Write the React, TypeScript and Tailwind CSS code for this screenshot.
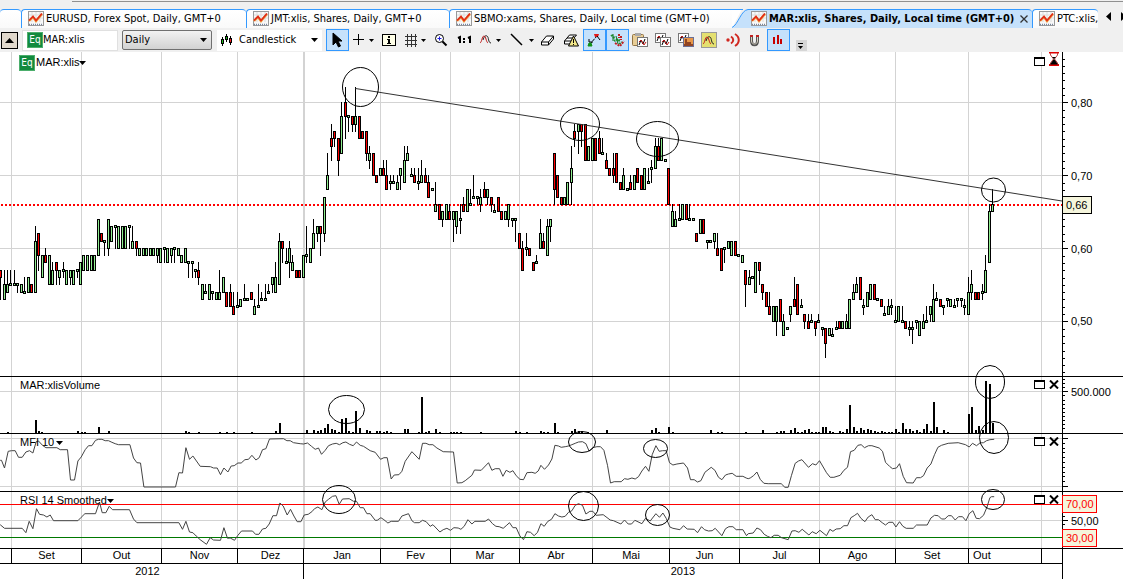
import React from 'react';

type Candle = [x: number, up: 0 | 1, top: number, bottom: number, high: number, low: number];

// x, rising flag, body top, body bottom, high, low (prices in cents)
const CANDLES: Candle[] = [
  [0,0,57,56,57,53],[4,1,55,53,57,53],[7,1,55,54,57,54],[10,1,55,55,57,55],[14,1,55,55,57,55],[17,1,55,55,55,54],
  [21,1,55,54,55,54],[24,1,54,54,56,54],[28,1,56,54,56,54],[31,0,55,54,55,54],[35,1,61,54,63,54],[38,0,62,59,62,57],
  [42,1,59,56,59,56],[45,0,59,58,60,58],[49,1,59,55,59,55],[52,1,57,55,58,55],[56,0,58,57,58,55],[59,1,57,56,57,55],
  [63,1,57,57,58,56],[66,1,57,55,57,55],[70,1,57,56,57,55],[73,1,57,55,57,55],[77,1,57,57,57,56],[80,1,58,55,58,55],
  [83,1,59,57,59,57],[87,1,59,57,59,57],[91,1,59,57,59,57],[94,1,59,57,59,57],[98,1,64,59,64,59],[101,0,62,61,62,61],
  [104,1,61,61,61,59],[108,1,64,60,64,59],[111,1,63,61,63,61],[115,1,63,63,63,60],[118,1,63,60,63,60],[122,1,63,60,63,60],
  [125,1,63,60,63,60],[129,1,63,63,63,60],[132,1,61,60,63,60],[136,0,61,60,61,59],[139,1,60,59,60,59],[143,1,60,59,60,59],
  [146,1,60,59,60,59],[150,1,60,59,60,59],[153,1,60,59,60,59],[157,1,60,59,60,58],[160,1,60,58,60,58],[164,1,60,60,60,58],
  [167,1,60,58,60,58],[171,1,60,59,60,58],[174,1,60,60,60,58],[178,1,60,59,60,59],[181,1,59,58,59,58],[185,1,60,58,60,58],
  [188,1,58,58,58,56],[192,1,58,58,58,56],[195,1,57,57,57,56],[198,0,57,56,58,55],[202,1,55,53,55,53],[205,1,54,54,55,54],
  [209,1,55,53,55,53],[212,1,54,54,54,53],[216,1,54,53,54,53],[219,1,54,53,57,53],[223,1,56,54,56,54],[226,0,54,52,54,52],
  [230,0,54,52,55,52],[233,0,52,51,54,51],[237,1,52,52,54,52],[240,1,53,52,53,52],[244,1,53,53,55,53],[247,1,53,53,53,53],
  [251,0,54,53,54,53],[254,1,52,51,53,51],[258,1,52,52,55,52],[261,1,53,53,54,53],[265,1,53,53,55,53],[268,1,54,54,55,54],
  [272,1,56,55,56,54],[275,1,56,54,58,54],[279,1,61,55,62,55],[282,0,61,60,61,58],[286,1,58,58,60,58],[289,1,60,58,61,56],
  [292,1,58,57,59,57],[296,0,57,56,57,56],[299,0,57,56,57,56],[303,1,59,56,59,56],[306,1,59,59,63,58],[310,1,60,58,60,58],
  [313,1,62,60,64,60],[317,1,63,62,63,61],[320,0,63,62,63,59],[324,1,67,62,67,61],[327,1,70,68,73,68],[331,0,75,74,77,72],
  [334,0,76,75,76,74],[338,0,75,72,75,70],[341,1,78,73,80,73],[345,0,80,78,82,75],[348,1,78,78,78,76],[352,0,78,77,78,76],
  [355,1,78,77,82,76],[359,0,78,75,78,75],[362,0,76,75,76,75],[366,0,76,73,76,72],[369,1,73,72,74,71],[373,0,73,70,73,70],
  [376,0,70,69,70,69],[380,1,71,70,71,70],[383,0,71,70,72,70],[386,0,70,68,72,68],[390,1,69,69,70,68],[393,1,69,69,70,69],
  [397,1,69,68,70,68],[400,1,71,70,71,68],[404,1,72,69,74,69],[407,1,73,72,74,72],[411,1,70,70,71,70],[414,0,70,69,71,69],
  [418,1,69,69,71,68],[421,1,70,69,72,69],[425,0,70,69,71,69],[428,0,69,67,70,67],[432,1,68,68,68,68],[435,1,66,65,69,65],
  [439,0,66,64,66,64],[442,1,65,64,65,63],[446,1,66,64,66,64],[449,0,65,64,66,64],[453,1,65,64,65,61],[456,1,65,63,65,62],
  [460,1,64,64,66,62],[463,0,66,65,67,65],[467,1,68,65,68,65],[470,1,66,66,68,66],[473,1,67,67,70,67],[477,1,67,67,67,66],
  [480,1,67,66,68,65],[484,0,68,67,69,67],[487,1,68,67,68,66],[491,0,67,66,67,65],[494,1,65,65,66,65],[498,0,67,65,67,65],
  [501,0,65,64,65,64],[505,1,65,64,65,64],[508,1,66,64,66,63],[512,1,64,64,64,63],[515,1,64,64,64,61],[519,0,62,60,62,60],
  [522,0,60,57,61,57],[526,1,60,60,62,59],[529,0,60,59,60,59],[533,0,58,57,58,57],[536,1,58,58,59,58],[540,1,62,60,64,60],
  [543,0,61,60,62,60],[547,1,63,59,64,59],[550,1,64,63,64,61],[554,0,73,68,73,66],[557,0,70,67,70,67],[561,0,67,66,67,66],
  [564,1,67,66,67,66],[567,1,69,66,69,66],[571,1,71,69,74,66],[574,0,76,75,77,74],[578,1,77,76,77,73],[581,0,77,76,77,74],
  [585,0,77,72,77,72],[588,1,74,72,74,72],[592,1,75,72,75,72],[595,0,75,72,75,72],[599,0,75,73,76,73],[602,1,73,73,75,73],
  [606,0,72,71,73,71],[609,0,71,70,71,70],[613,0,71,70,73,69],[616,0,73,69,73,69],[620,0,69,68,69,68],[623,1,70,68,71,68],
  [627,1,68,68,68,68],[630,0,69,68,70,68],[634,1,70,68,70,68],[637,0,71,69,71,69],[641,0,70,68,70,68],[644,1,71,68,71,68],
  [648,1,69,69,71,69],[651,1,71,71,72,69],[655,1,74,71,75,71],[658,0,74,72,75,72],[661,1,75,72,75,72],[665,1,72,72,72,72],
  [668,0,71,66,71,66],[672,1,65,63,66,63],[675,1,64,63,65,63],[679,1,64,64,66,64],[682,1,66,64,66,64],[686,0,66,64,66,64],
  [689,1,64,64,66,64],[693,1,64,64,64,64],[696,0,62,61,62,61],[700,1,64,62,64,62],[703,0,64,62,64,62],[707,1,61,61,61,60],
  [710,1,61,61,61,61],[714,1,62,61,62,60],[717,0,60,59,62,59],[721,0,60,57,60,57],[724,1,60,60,60,58],[728,1,61,60,61,60],
  [731,1,61,59,61,59],[735,0,61,59,61,59],[738,1,59,59,59,59],[742,1,59,58,59,58],[745,0,57,55,57,52],[749,1,56,55,57,55],
  [752,1,56,56,56,56],[755,1,58,54,58,54],[759,0,58,57,58,55],[762,0,55,54,55,53],[766,0,54,52,54,52],[769,0,52,51,54,51],
  [773,1,52,50,52,50],[776,1,52,50,52,48],[780,0,53,50,53,50],[783,1,50,48,51,48],[787,1,49,49,49,49],[790,1,52,51,52,50],
  [794,0,53,52,56,52],[797,0,55,51,55,51],[801,1,52,52,53,52],[804,0,51,50,51,49],[808,0,50,49,51,49],[811,1,50,50,51,50],
  [815,0,50,49,50,48],[818,1,50,50,51,50],[822,1,49,49,49,48],[825,0,49,47,49,45],[829,1,49,48,49,48],[832,1,48,48,49,48],
  [836,1,49,49,50,49],[839,0,50,49,50,49],[842,1,50,49,50,49],[846,1,50,49,51,49],[849,1,53,49,53,49],[853,1,54,53,55,53],
  [856,1,55,54,56,54],[860,0,56,53,56,53],[863,1,52,52,53,51],[867,1,54,52,54,52],[870,1,55,53,55,53],[874,0,55,53,55,53],
  [877,1,53,53,53,53],[881,0,53,52,53,52],[884,1,51,51,52,51],[888,1,52,51,53,51],[891,1,52,52,53,51],[895,1,50,50,52,50],
  [898,1,52,50,52,50],[902,1,50,50,52,50],[905,0,50,49,50,49],[909,1,49,49,50,48],[912,1,49,49,50,47],[916,1,50,50,50,49],
  [919,1,50,48,50,48],[923,1,50,49,51,49],[926,1,50,50,52,50],[930,1,52,51,52,50],[933,1,53,50,55,50],[936,1,53,53,54,53],
  [940,0,53,52,53,52],[943,1,52,52,52,51],[947,1,53,53,53,52],[950,1,53,52,53,52],[954,1,52,52,53,52],[957,1,53,53,53,52],
  [961,1,53,53,53,52],[964,1,52,52,53,51],[968,1,54,51,56,51],[971,1,55,54,57,53],[975,0,54,53,54,53],[978,0,54,53,54,53],
  [982,1,54,54,55,53],[985,1,57,54,59,54],[989,1,65,58,66,58],[992,1,66,65,68,65],
];

// x and height of each volume bar
const VOLUME: [number, number][] = [
  [7,1],[35,13],[38,2],[41,1],[77,2],[81,1],[84,1],[98,6],[108,2],[185,2],[188,1],[198,1],[219,1],[226,1],[233,1],[251,1],
  [275,2],[279,10],[306,3],[313,3],[317,2],[320,3],[324,5],[327,9],[331,4],[334,3],[338,1],[341,14],[345,15],[348,2],[352,1],
  [355,22],[359,5],[366,3],[369,2],[376,2],[379,2],[383,1],[386,2],[390,1],[404,4],[407,4],[418,1],[421,36],[425,1],[428,2],
  [435,4],[439,1],[450,1],[453,1],[456,1],[460,1],[480,1],[515,2],[519,1],[526,1],[540,2],[543,1],[547,1],[554,10],[557,1],
  [571,2],[574,4],[578,2],[581,2],[587,1],[606,3],[651,3],[655,5],[658,1],[668,6],[672,1],[710,3],[717,1],[721,1],[745,1],
  [762,3],[776,1],[780,2],[783,2],[790,3],[794,5],[797,1],[801,1],[804,3],[808,4],[811,1],[815,1],[818,1],[822,6],[825,6],
  [829,2],[832,1],[839,2],[842,1],[846,4],[849,28],[853,6],[856,2],[860,5],[863,3],[867,4],[870,3],[874,2],[877,1],[881,2],
  [884,1],[888,1],[891,1],[895,4],[898,1],[902,10],[905,4],[909,4],[912,2],[916,3],[919,1],[923,4],[926,9],[930,2],[933,31],
  [936,6],[943,3],[947,1],[968,19],[971,26],[975,3],[978,7],[982,3],[985,52],[989,49],[992,10],
];

type Span = { start: number; points: number[] };

// Indicator samples, three units to a pixel
const MFI: Span[] = [
  { start: 0, points: [0,270,4,270,13,293,24,243,34,241,45,241,55,261,66,261,77,245,88,241,98,248,108,214,115,212,127,225,137,232,170,232,180,238,202,238,211,329,223,329,233,272,243,260,255,238,265,226,275,226,286,210,295,207,305,207,315,211,325,211,335,216,345,220,355,223,389,223,400,263,410,277,421,278,431,350,526,350,536,307,547,308,557,232,568,267,578,257,600,288,631,289,640,293,651,293,661,313,671,293,683,305,693,287,702,286,713,278,723,278,734,268,745,267,755,255,767,269,777,262,787,238,797,235,808,206,850,205,860,211,870,211,880,217,900,220,910,221,922,218,934,228,945,237,955,233,964,252,975,240,985,226,997,221,1008,219,1018,223,1028,217,1037,215,1048,222,1059,226,1069,215,1080,225,1090,228,1110,241] },
  { start: 1125, points: [0,246,16,267,26,262,36,262,48,326,57,314,71,313,80,303,90,273,110,244,132,267,142,219,152,219,162,223,173,223,185,233,204,244,235,245,246,338,260,337,270,331,290,315,298,299,318,300,340,277,350,300,360,295,373,295,383,318,393,300,404,306,413,301,423,316,434,327,445,328,455,307,470,306,480,309,489,302,497,285,508,297,520,284,530,266,539,225,550,227,558,231,570,229,580,227,590,223,600,219,610,215,622,214,632,220,642,243,652,232,665,229,676,229,686,240,697,285,706,338,717,334,738,334,748,325,758,327,770,323,780,326,790,319,800,302,811,288,821,303,831,253,842,226,852,243,862,241,873,241,883,277,893,284,905,281,925,278,937,293,946,328,957,328,967,335,977,331,989,306,1008,291,1019,300,1030,321,1040,328,1051,314,1060,311,1071,309,1083,318,1103,318,1113,323] },
  { start: 2244, points: [0,325,6,323,16,316,26,305,36,327,47,339,60,340,99,340,110,351,120,351,130,315,141,279,151,272,161,268,181,291,193,280,203,284,214,271,235,307,246,321,257,321,276,315,287,300,298,291,307,244,318,240,329,225,339,223,349,232,361,226,371,226,393,233,403,243,412,276,424,288,433,295,445,293,454,280,465,318,475,337,495,338,505,322,517,322,526,316,537,293,548,281,559,253,569,231,580,225,600,219,630,217,652,223,663,230,673,219,685,226,695,218,706,217,715,211,725,208,738,207] },
];

const RSI: Span[] = [
  { start: 0, points: [0,463,13,474,66,474,77,487,87,453,98,475,109,415,118,432,130,434,140,440,150,434,160,451,233,451,243,441,254,430,286,430,298,395,306,427,317,427,327,408,337,418,388,418,400,446,410,457,536,457,547,477,557,453,568,485,578,487,588,497,600,508,619,522,630,502,640,509,661,510,671,472,682,504,690,503,703,510,713,495,724,482,757,482,766,492,776,492,787,476,797,474,807,461,818,436,829,436,839,398,849,407,861,434,871,417,881,437,891,454,902,454,912,434,924,432,935,424,943,415,953,410,965,418,975,395,985,387,997,378,1007,376,1017,402,1027,386,1047,385,1060,393,1069,393,1080,412,1090,412,1100,430,1110,430] },
  { start: 1125, points: [0,450,6,450,17,442,26,448,38,458,48,453,70,453,80,437,100,430,110,451,118,457,132,457,142,450,153,454,165,468,173,463,194,485,204,478,215,474,226,480,236,472,249,473,257,477,267,468,278,448,290,461,299,453,330,453,340,446,352,460,362,468,372,469,384,474,393,466,403,457,413,472,423,472,434,497,445,508,455,484,466,486,477,496,487,486,497,460,507,468,518,453,529,447,539,430,550,437,560,440,570,438,580,426,590,421,600,405,610,400,622,405,632,431,644,423,653,423,663,435,684,433,705,449,715,451,737,461,748,449,759,461,769,461,779,450,800,460,811,444,825,452,842,430,853,441,863,428,873,444,884,470,893,474,914,478,925,466,936,476,957,477,967,487,979,469,988,478,1000,482,1011,481,1020,474,1040,496,1051,475,1061,469,1073,469,1083,478,1103,478,1114,496] },
  { start: 2244, points: [0,490,15,488,26,473,37,478,48,492,58,498,68,502,78,495,90,495,100,502,120,508,131,482,141,481,152,486,162,477,182,494,192,484,204,490,215,480,235,496,245,477,254,483,264,476,276,475,287,466,298,466,308,442,318,436,328,429,338,444,350,454,360,440,371,433,381,448,391,448,402,457,412,464,422,456,434,456,443,470,454,454,464,468,474,474,495,474,505,464,537,464,548,443,559,435,570,436,580,446,590,446,600,436,610,436,621,449,631,439,643,439,653,451,663,430,674,421,684,444,694,445,706,435,716,411,725,382,730,379,738,379] },
];

const MONTH_LINES = [11, 81, 161, 237, 380, 450, 519, 592, 669, 739, 819, 895, 968, 1041];

const CIRCLES: [number, number, number, number][] = [
  [360.5, 87, 18, 19.5], [580, 124, 19.5, 16.5], [657.5, 139, 21, 17.5], [993.5, 190, 12, 12],
  [346.5, 409.5, 18, 14], [990, 382, 14.5, 16.5], [994, 437.5, 14.5, 16], [993, 499.5, 11.5, 10],
  [339, 499.5, 16.5, 14], [582, 442, 13.5, 10.5], [655.5, 448.5, 12, 9], [583.5, 506, 15, 14.5], [657.5, 515, 12, 10.5],
];

const priceY = (cents: number) => Math.floor(196.3 + (60 - cents) * 7.3);

function toPoints(spans: Span[], top: number) {
  const out: string[] = [];
  spans.forEach(({ start, points }) => {
    for (let i = 0; i < points.length; i += 2) {
      out.push(`${((start + points[i]) / 3 + 0.2).toFixed(1)},${((points[i + 1] - top) / 3).toFixed(1)}`);
    }
  });
  return out.join(' ');
}

function Plot({ height, lines, children }: { height: number; lines: number[]; children: React.ReactNode }) {
  return (
    <svg viewBox={`0 0 1062 ${height}`} preserveAspectRatio="none" className="block h-full w-full" aria-hidden="true">
      <g fill="#d3d3d3" shapeRendering="crispEdges">
        {MONTH_LINES.map((x) => <rect key={x} x={x} y={0} width={1} height={height} />)}
        <rect x={303} y={0} width={2} height={height} />
        {lines.map((y) => <rect key={y} x={0} y={y} width={1062} height={1} />)}
      </g>
      {children}
    </svg>
  );
}

function Axis({ height, major, minor, children }: { height: number; major: number[]; minor: number[]; children?: React.ReactNode }) {
  return (
    <svg viewBox={`0 0 61 ${height}`} className="block h-full w-[61px] shrink-0 font-['Liberation_Sans',sans-serif] text-[11px]">
      <g shapeRendering="crispEdges">
        <rect width={1} height={height} />
        {minor.map((y) => <rect key={y} x={1} y={y} width={2} height={1} />)}
        {major.map((y) => <rect key={y} x={1} y={y} width={5} height={1} />)}
      </g>
      {children}
    </svg>
  );
}

const range = (from: number, to: number, step: number) => {
  const out: number[] = [];
  for (let y = from; y < to; y += step) out.push(Math.round(y));
  return out;
};

function Candles() {
  return (
    <g shapeRendering="crispEdges">
      {CANDLES.map(([x, up, top, bottom, high, low]) => {
        const flat = top === bottom;
        const y1 = priceY(top) - (flat ? 1 : 0);
        const y2 = priceY(bottom) + (flat ? 2 : 1);
        const h1 = priceY(high);
        return (
          <g key={x}>
            <rect x={x} y={h1} width={1} height={priceY(low) + 1 - h1} />
            <rect x={x - 1} y={y1} width={3} height={y2 - y1} />
            <rect x={x} y={y1 + 1} width={1} height={y2 - y1 - 2} fill={up ? '#90ee90' : '#ff0000'} />
          </g>
        );
      })}
    </g>
  );
}

function EqIcon() {
  return (
    <span className="flex h-4 w-4 shrink-0 items-center justify-center border border-[#4cae6c] bg-[#128a3e] font-['DejaVu_Sans_Condensed','DejaVu_Sans',sans-serif] text-[10px] leading-[14px] text-white">
      Eq
    </span>
  );
}

function ChartIcon() {
  return (
    <svg viewBox="0 0 16 16" className="h-4 w-4 shrink-0" aria-hidden="true">
      <rect x=".5" y=".5" width="15" height="14" fill="#f8f8f8" stroke="#9a9a9a" />
      <path d="M1 4h14M1 7h14M4 1v10M8 1v10M12 1v10" stroke="#dcdcdc" fill="none" />
      <path d="M1 10l4-4 3 4 6-7" stroke="#f0a040" strokeWidth="2.4" fill="none" />
      <path d="M1 9.500l4-4 3 4 6-7" stroke="#e02818" strokeWidth="1.600" fill="none" />
      <path d="M1 13.500h14" stroke="#7886a0" strokeWidth="1.500" strokeDasharray="1 1" />
    </svg>
  );
}

function Down({ className = '' }: { className?: string }) {
  return (
    <svg viewBox="0 0 7 4" className={`pointer-events-none h-1 w-[7px] shrink-0 ${className}`} aria-hidden="true">
      <path d="M0 0h7L3.500 4z" />
    </svg>
  );
}

function MaxIcon() {
  return (
    <button aria-label="Maximize panel" className="block">
      <svg viewBox="0 0 11 9" className="h-[9px] w-[11px]" shapeRendering="crispEdges">
        <rect width="11" height="9" />
        <rect x="1" y="2" width="9" height="6" fill="#fff" />
      </svg>
    </button>
  );
}

function PanelButtons() {
  return (
    <div className="absolute right-[3px] top-[3px] flex items-center gap-1">
      <MaxIcon />
      <button aria-label="Close panel">
        <svg viewBox="0 0 10 9" className="h-[9px] w-[10px]">
          <path d="M1 .5l8 8M9 .5l-8 8" stroke="#000" strokeWidth="2" />
        </svg>
      </button>
    </div>
  );
}

function Tab({ className, children }: { className: string; children: React.ReactNode }) {
  return (
    <button role="tab" aria-selected="false" className={`flex h-[19px] shrink-0 items-center gap-0.5 overflow-hidden whitespace-nowrap rounded-t-[4px] border-l border-t border-[#3399ff] bg-gradient-to-b from-white to-[#fafafa] pl-1.5 ${className}`}>
      {children}
    </button>
  );
}

function Tool({ label, box, width, active, children }: { label: string; box: string; width: string; active?: boolean; children: React.ReactNode }) {
  return (
    <button
      aria-label={label}
      className={`flex h-[22px] shrink-0 items-center justify-center ${width} ${active ? 'bg-[#c5e1fb] outline outline-1 -outline-offset-1 outline-[#3399ff]' : ''}`}
    >
      <svg viewBox={box} className="h-[22px] w-full" fill="none" stroke="#000">
        {children}
      </svg>
    </button>
  );
}

const Arrow = ({ x }: { x: number }) => <path d={`M${x} 39h5l-2.500 3z`} fill="#000" stroke="none" />;

const Wave = ({ x, y }: { x: number; y: number }) => (
  <g transform={`translate(${x} ${y})`}>
    <path d="M3 5C4 2 5 0 7 1s1 7 4 7" stroke="#222" />
    <path d="M0 8C2 7 2 1 4 1s2 6 4 7" stroke="#c01818" />
  </g>
);

const Sheet = ({ x, y }: { x: number; y: number }) => (
  <g>
    <rect x={x + 0.5} y={y + 0.5} width="10" height="9" fill="#fff" stroke="#777" />
    <path d={`M${x + 2} ${y + 8}l2-5 2 4 2-5`} stroke="#000" />
    <path d={`M${x + 2} ${y + 5}l2-2 3 5 2-3`} stroke="#c01818" />
  </g>
);

function Toolbar() {
  return (
    <div role="toolbar" aria-label="Chart tools" className="flex h-6 items-center overflow-hidden bg-[#f0f0f0] font-['DejaVu_Sans_Condensed','DejaVu_Sans',sans-serif] text-[11px]">
      <button aria-label="Collapse" className="ml-px flex h-[17px] w-[17px] shrink-0 items-center justify-center border border-black bg-[#e0d8cc]">
        <svg viewBox="0 0 9 5" className="h-[5px] w-[9px]"><path d="M4.500 0L9 5H0z" /></svg>
      </button>
      <label className="ml-1 flex h-[21px] w-24 shrink-0 items-center border border-[#e0e0e0] bg-white pl-1">
        <EqIcon />
        <input aria-label="Instrument" defaultValue="MAR:xlis" className="w-full min-w-0 bg-transparent outline-none" />
      </label>
      <label className="ml-1 flex h-5 w-[90px] shrink-0 items-center rounded-[2px] border border-[#707070] bg-gradient-to-b from-[#f2f2f2] to-[#d2d2d2] pl-0.5 pr-1">
        <select aria-label="Period" className="w-full appearance-none bg-transparent outline-none"><option>Daily</option></select>
        <Down />
      </label>
      <label className="ml-[5px] flex h-[21px] w-[105px] shrink-0 items-center bg-white pl-1 pr-1">
        <svg viewBox="0 0 12 12" className="h-3 w-3 shrink-0" shapeRendering="crispEdges" aria-hidden="true">
          <path d="M1 3h1v9H1zM5 0h1v8H5zM9 2h1v9H9z" />
          <path d="M0 5h3v5H0zM4 2h3v4H4zM8 4h3v5H8z" />
          <path d="M1 6h1v3H1z" fill="#20c020" /><path d="M5 3h1v2H5z" fill="#20c020" /><path d="M9 5h1v3H9z" fill="#f02020" />
        </svg>
        <select aria-label="Chart type" className="ml-1.5 w-full min-w-0 appearance-none bg-transparent outline-none"><option>Candlestick</option></select>
        <Down />
      </label>
      <Tool label="Pointer" box="326 29 23 22" width="ml-1 w-[23px]" active>
        <path d="M333 33v12l3-3 2.500 5 2-1-2.500-5h4z" fill="#000" />
      </Tool>
      <Tool label="Crosshair" box="349 29 30 22" width="w-[30px]"><path d="M353 39.500h11M358.500 34v11" /><Arrow x={369} /></Tool>
      <Tool label="Information" box="379 29 21 22" width="w-[21px]">
        <g shapeRendering="crispEdges"><rect x="382.500" y="34.500" width="13" height="11" fill="#ffffe8" /><path d="M388 36h2v2h-2zM387 39h3v4h1v1h-4v-1h1v-3h-1z" fill="#000" stroke="none" /></g>
      </Tool>
      <Tool label="Grid" box="400 29 30 22" width="w-[30px]"><path d="M405 36.500h12M405 40.500h12M405 44.500h12M407.500 34v13M411.500 34v13M415.500 34v13" stroke="#333" /><Arrow x={421} /></Tool>
      <Tool label="Zoom" box="430 29 22 22" width="w-[22px]"><circle cx="439.500" cy="38.500" r="4" fill="#fff" /><path d="M437.500 38.500h4M439.500 36.500v4" stroke="#2020e0" /><path d="M442.500 41.500l4 4" strokeWidth="2" /></Tool>
      <Tool label="Actual size" box="452 29 24 22" width="w-6"><path d="M458 38l2-1v6M468 38l2-1v6" strokeWidth="2" /><path d="M463 38h2v2h-2zM463 41h2v2h-2z" fill="#000" stroke="none" /></Tool>
      <Tool label="Indicators" box="476 29 29 22" width="w-[29px]"><Wave x={480} y={35} /><Arrow x={496} /></Tool>
      <Tool label="Line" box="505 29 33 22" width="w-[33px]"><path d="M511 34l11 11" strokeWidth="1.500" /><Arrow x={529} /></Tool>
      <Tool label="Eraser" box="538 29 21 22" width="w-[21px]"><path d="M541.500 42l5-6h7l-5 6zM541.500 42v3h7v-3M548.500 45l5-6v-3" fill="#fff" /></Tool>
      <Tool label="Erase all" box="559 29 24 22" width="w-6">
        <path d="M564.500 41l5-6h7l-5 6zM564.500 41v3h7v-3M567 38h7" fill="#fff" /><path d="M573.500 36l5 10h-10z" fill="#f4e88a" /><path d="M573.500 39v4M573.500 44v1" />
      </Tool>
      <Tool label="Extend line" box="583 29 23 22" width="w-[23px]" active>
        <path d="M590 44l7-8" strokeDasharray="3 1" /><path d="M589 39v3h4" /><path d="M594 34h5l-1 3h-3z" fill="#e01818" stroke="none" /><path d="M588 46l1-3h2l1 3z" fill="#109018" stroke="#109018" /><path d="M597 36l3 4" />
      </Tool>
      <Tool label="Show trades" box="606 29 23 22" width="w-[23px]" active>
        <path d="M611 36c4-3 2 8 6 4s0 7 5 2" stroke="#209030" strokeWidth="2" strokeDasharray="2 1" /><path d="M613 34v7M616 36l2 8" stroke="#107820" /><path d="M619 34v4M621 36v4M615 43l5 3 4-5" stroke="#c02020" strokeWidth="2" strokeDasharray="2 1" />
      </Tool>
      <Tool label="Paste indicator" box="629 29 23 22" width="w-[23px]">
        <rect x="632.500" y="34.500" width="11" height="11" rx="1" fill="#e8cd96" stroke="#927444" /><rect x="635" y="33" width="6" height="3" fill="#aaa" stroke="none" /><Sheet x={637} y={37} />
      </Tool>
      <Tool label="Copy indicator" box="652 29 23 22" width="w-[23px]"><Sheet x={655} y={33} /><Sheet x={660} y={37} /></Tool>
      <Tool label="Save template" box="675 29 23 22" width="w-[23px]"><Sheet x={678} y={33} /><rect x="683.500" y="37.500" width="10" height="9" fill="#e79748" stroke="#6b6f95" /><path d="M686 39v4h5M684 45h9" stroke="#914422" strokeWidth="2" /></Tool>
      <Tool label="Template" box="698 29 23 22" width="w-[23px]"><rect x="701.500" y="32.500" width="15" height="15" fill="#e4e070" stroke="#999" /><Wave x={703} y={36} /></Tool>
      <Tool label="Alerts" box="721 29 23 22" width="w-[23px]"><g stroke="#d02820" strokeWidth="2"><path d="M731 36.500c3 2 3 5 0 7M735 34c5 3 5 9 0 12" /></g><circle cx="728" cy="40" r="1.700" fill="#d02820" stroke="none" /></Tool>
      <Tool label="Magnet" box="744 29 23 22" width="w-[23px]"><path d="M751.500 35v6c0 5 6 5 6 0v-6" stroke="#555" strokeWidth="3" /><path d="M751.500 37v4c0 4 6 4 6 0v-4" stroke="#d6d0c0" /><path d="M750 36h3M756 36h3" stroke="#c02020" strokeWidth="2" /></Tool>
      <Tool label="Volume" box="767 29 23 22" width="w-[23px]" active><path d="M774 37v7M778 35v9" stroke="#c80000" strokeWidth="2" shapeRendering="crispEdges" /><path d="M781 39v5" stroke="#c80000" strokeWidth="2" shapeRendering="crispEdges" /></Tool>
      <Tool label="More tools" box="790 29 18 22" width="w-[18px]"><rect x="796" y="40" width="11" height="12" fill="#d6d6d6" stroke="none" /><path d="M798 43.500h5" /><path d="M798 46h5l-2.500 3z" fill="#000" stroke="none" /></Tool>
    </div>
  );
}

export default function App() {
  return (
    <div className="min-h-screen overflow-hidden bg-white text-black">
      <header className="bg-[#f0f0f0]">
        <div className="h-[9px] pl-[72px] pt-px"><div className="h-px bg-[#909090]" /></div>
        <div role="tablist" className="flex h-[19px] font-['DejaVu_Sans_Condensed','DejaVu_Sans',sans-serif] text-[11px]">
          <Tab className="w-[21px] border-l-0"> </Tab>
          <Tab className="w-[225px]"><ChartIcon />EURUSD, Forex Spot, Daily, GMT+0</Tab>
          <Tab className="w-[203px]"><ChartIcon />JMT:xlis, Shares, Daily, GMT+0</Tab>
          <Tab className="w-[283px] rounded-tr-none"><ChartIcon />SBMO:xams, Shares, Daily, Local time (GMT+0)</Tab>
          <svg viewBox="0 0 16 19" className="h-[19px] w-4 shrink-0" aria-hidden="true">
            <path d="M0 0h10L0 19z" fill="#fff" /><path d="M0 .5h11" stroke="#39f" />
            <path d="M0 19C6 17 9 1 16 .5V19z" fill="#c5e1fb" /><path d="M0 18.500C6 16 9 1 16 .5" stroke="#39f" fill="none" />
          </svg>
          <button role="tab" aria-selected="true" className="flex h-[19px] w-[284px] shrink-0 items-center justify-between whitespace-nowrap rounded-tr-[4px] border-t border-[#3399ff] bg-[#c5e1fb] pl-[3px] pr-1 font-bold">
            <span className="flex items-center gap-0.5"><ChartIcon />MAR:xlis, Shares, Daily, Local time (GMT+0)</span>
            <svg viewBox="0 0 8 8" className="h-2 w-2 shrink-0" aria-hidden="true"><path d="M.5.5l7 7M7.500.5l-7 7" stroke="#333" strokeWidth="1.300" /></svg>
          </button>
          <Tab className="w-[66px]"><ChartIcon />PTC:xlis,</Tab>
          <div className="flex flex-1 items-center gap-2.5 overflow-hidden bg-[#f0f0f0] pb-1 pl-2">
            <button aria-label="Previous tabs" className="shrink-0"><svg viewBox="0 0 5 9" className="h-[9px] w-[5px]"><path d="M5 0v9L0 4.500z" /></svg></button>
            <button aria-label="Next tabs" className="shrink-0"><svg viewBox="0 0 5 9" className="h-[9px] w-[5px]"><path d="M0 0v9l5-4.500z" /></svg></button>
          </div>
        </div>
        <Toolbar />
      </header>

      <main className="relative font-['Liberation_Sans',sans-serif] text-[11px] leading-[13px]">
        <section aria-label="Price" className="flex h-[325px] border-b border-black">
          <div className="relative min-w-0 flex-1">
            <Plot height={324} lines={[50, 123, 196, 269]}>
              <path d="M1 153H1062" stroke="#f00" strokeWidth="2" strokeDasharray="2 2" shapeRendering="crispEdges" />
              <Candles />
              <path d="M355.500 36.500L1062 149" stroke="#333" fill="none" />
            </Plot>
            <button className="absolute left-[19px] top-[3px] flex items-center gap-px"><EqIcon /><span className="pb-0.5">MAR:xlis</span><Down className="-ml-px" /></button>
            <div className="absolute right-[3px] top-0 flex items-center gap-1">
              <div className="pt-1"><MaxIcon /></div>
              <svg viewBox="0 0 10 14" className="h-3.5 w-2.5" aria-label="Waiting for data" role="img">
                <path d="M0 .5h10M0 13h10" stroke="#e00000" strokeWidth="2" /><path d="M1.500 1v2l3 4-3 4v2M8.500 1v2l-3 4 3 4v2" stroke="#c04040" fill="none" />
                <path d="M1 12.500l2-3 2-2.500 2 2.500 2 3zM3 5h4L5 7z" />
              </svg>
            </div>
          </div>
          <Axis height={324} major={[50, 123, 196, 269]} minor={range(6.5, 322, 7.3)}>
            <text x={9} y={55}>0,80</text><text x={9} y={128}>0,70</text><text x={9} y={201}>0,60</text><text x={9} y={273}>0,50</text>
            <rect x={0.5} y={144.5} width={29} height={17} fill="#f5f5dc" stroke="#000" /><text x={4} y={157}>0,66</text>
          </Axis>
        </section>

        <section aria-label="Volume" className="flex h-[57px] border-b border-black">
          <div className="relative min-w-0 flex-1">
            <Plot height={56} lines={[14]}>
              <g shapeRendering="crispEdges">{VOLUME.map(([x, h]) => <rect key={x} x={x} y={56 - h} width={2} height={h} />)}</g>
            </Plot>
            <h2 className="absolute left-5 top-0.5">MAR:xlisVolume</h2>
            <PanelButtons />
          </div>
          <Axis height={56} major={[14]} minor={range(2, 54, 4.1)}><text x={9} y={19}>500.000</text></Axis>
        </section>

        <section aria-label="Money flow index" className="flex h-[58px] border-b border-black">
          <div className="relative min-w-0 flex-1">
            <Plot height={57} lines={[4, 52]}><polyline points={toPoints(MFI, 191)} fill="none" stroke="#444" /></Plot>
            <button className="absolute left-5 top-0.5 flex items-center gap-0.5">MFI 10<Down /></button>
            <PanelButtons />
          </div>
          <Axis height={57} major={[4, 52]} minor={range(8.8, 50, 4.8)} />
        </section>

        <section aria-label="Relative strength index" className="flex h-[57px] border-b border-black">
          <div className="relative min-w-0 flex-1">
            <Plot height={56} lines={[28]}>
              <g shapeRendering="crispEdges"><rect y={12} width={1062} height={1} fill="#f00" /><rect y={45} width={1062} height={1} fill="#007800" /></g>
              <polyline points={toPoints(RSI, 365)} fill="none" stroke="#444" />
            </Plot>
            <button className="absolute left-5 top-0.5 flex items-center">RSI 14 Smoothed<Down /></button>
            <PanelButtons />
          </div>
          <Axis height={56} major={[28]} minor={[24, 32]}>
            <text x={9} y={33}>50,00</text>
            <rect x={0.5} y={3.5} width={34} height={17} fill="#f5f5dc" stroke="#f00" /><text x={4} y={16} fill="#f00">70,00</text>
            <rect x={0.5} y={37.5} width={34} height={17} fill="#f5f5dc" stroke="#f00" /><text x={4} y={50} fill="#f00">30,00</text>
          </Axis>
        </section>

        <div className="flex">
          <div className="min-w-0 flex-1">
            <div className="grid h-[15px] grid-cols-[12fr_70fr_80fr_76fr_66fr_77fr_70fr_69fr_73fr_77fr_70fr_80fr_76fr_73fr_73fr_20fr] divide-x divide-black border-b border-black text-center">
              <span />
              {['Set', 'Out', 'Nov', 'Dez', 'Jan', 'Fev', 'Mar', 'Abr', 'Mai', 'Jun', 'Jul', 'Ago', 'Set'].map((m, i) => <span key={i} className="overflow-hidden">{m}</span>)}
              <span className="pl-1 text-left">Out</span>
              <span />
            </div>
            <div className="grid h-[15px] grid-cols-[304fr_758fr] divide-x divide-black text-center">
              <span className="pr-2 leading-[15px]">2012</span>
              <span className="leading-[15px]">2013</span>
            </div>
          </div>
          <div className="w-[61px] shrink-0 border-l border-black" />
        </div>

        <div className="pointer-events-none absolute inset-y-0 left-0 right-[61px]">
          <svg viewBox="0 52 1062 527" preserveAspectRatio="none" className="block h-full w-full" aria-hidden="true">
            {CIRCLES.map(([cx, cy, rx, ry]) => (
              <ellipse key={`${cx}-${cy}`} cx={cx} cy={cy} rx={rx} ry={ry} fill="none" stroke="#000" />
            ))}
          </svg>
        </div>
      </main>
    </div>
  );
}
